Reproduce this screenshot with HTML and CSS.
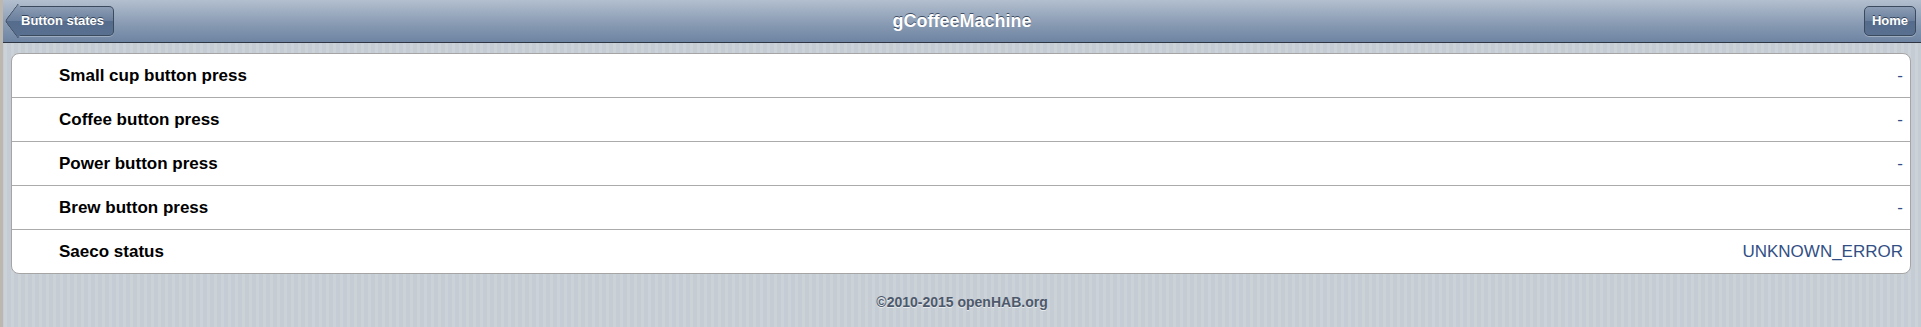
FILE: index.html
```html
<!DOCTYPE html>
<html lang="en">
<head>
    <meta charset="UTF-8">
    <title>gCoffeeMachine</title>
    <link rel="stylesheet" href="styles.css">
</head>
<body>

    <div class="toolbar">
        <a class="back-button" href="#">Button states</a>
        <h1>gCoffeeMachine</h1>
        <a class="home-button" href="#">Home</a>
    </div>

    <!-- Items -->
    <ul class="panel">
        <li><span class="label">Small cup button press</span><span class="value">-</span></li>
        <li><span class="label">Coffee button press</span><span class="value">-</span></li>
        <li><span class="label">Power button press</span><span class="value">-</span></li>
        <li><span class="label">Brew button press</span><span class="value">-</span></li>
        <li><span class="label">Saeco status</span><span class="value">UNKNOWN_ERROR</span></li>
    </ul>

    <footer>&copy;2010-2015 openHAB.org</footer>

</body>
</html>
```

FILE: styles.css
```css
body {
    margin: 0;
    font-family: "Liberation Sans", Arial, sans-serif;
    background-color: #c5ccd4;
    background-image: repeating-linear-gradient(90deg, #c5ccd4 0, #c5ccd4 4px, #cbd2d8 4px, #cbd2d8 7px);
    border-left: 3px solid #bcb8b0;
    min-height: 327px;
    box-sizing: border-box;
}

.toolbar {
    position: relative;
    height: 42px;
    background: linear-gradient(#b3bfcf, #8a9cb4 55%, #6d84a2);
    border-bottom: 1px solid #2d3642;
    display: flex;
    align-items: center;
    justify-content: space-between;
    padding: 0 5px 0 3px;
}

.toolbar h1 {
    position: absolute;
    left: 0;
    right: 0;
    top: 0;
    margin: 0;
    line-height: 42px;
    text-align: center;
    font-size: 18px;
    font-weight: bold;
    color: white;
    text-shadow: 0 -1px 0 #3f4d62;
    pointer-events: none;
}

.back-button,
.home-button {
    position: relative;
    z-index: 1;
    height: 28px;
    line-height: 28px;
    font-size: 13px;
    font-weight: bold;
    color: white;
    text-decoration: none;
    text-shadow: 0 -1px 0 #34445a;
    background: linear-gradient(#8c9db4, #6a7f9d 50%, #566c8c 51%, #5a7090);
    border: 1px solid #3c4a5e;
    border-radius: 5px;
    box-shadow: 0 1px 0 rgba(255, 255, 255, 0.3);
}

.back-button {
    margin-left: 11px;
    padding: 0 9px 0 4px;
    border-left: none;
    border-radius: 0 5px 5px 0;
}

/* arrow tip of the back button */
.back-button::before {
    content: "";
    position: absolute;
    left: -10px;
    top: 3px;
    width: 21px;
    height: 21px;
    background: linear-gradient(135deg, #8c9db4, #6a7f9d 50%, #566c8c 51%, #5a7090);
    border-left: 1px solid #3c4a5e;
    border-bottom: 1px solid #3c4a5e;
    transform: rotate(45deg) skew(8deg, 8deg);
    border-radius: 0 0 0 3px;
    z-index: -1;
}

.home-button {
    padding: 0 7px;
}

.panel {
    list-style: none;
    margin: 10px 10px 0 8px;
    padding: 0;
    background: white;
    border: 1px solid #a5a5a5;
    border-radius: 8px;
    overflow: hidden;
}

.panel li {
    height: 43px;
    display: flex;
    align-items: center;
    justify-content: space-between;
    padding: 0 7px 0 47px;
    border-top: 1px solid #ababab;
}

.panel li:first-child {
    border-top: none;
}

.label {
    font-size: 17px;
    font-weight: bold;
    color: black;
}

.value {
    font-size: 17px;
    color: #324f85;
}

footer {
    text-align: center;
    padding: 20px 0 17px;
    font-size: 14px;
    font-weight: bold;
    color: #4d596b;
    text-shadow: 0 1px 0 rgba(255, 255, 255, 0.6);
}
```
